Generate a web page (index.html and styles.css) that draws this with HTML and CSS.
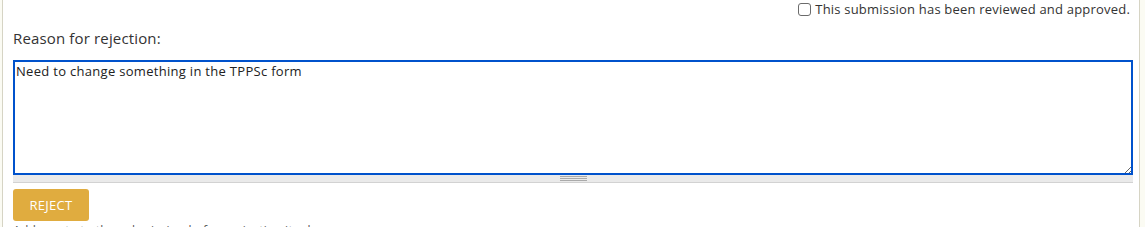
FILE: index.html
```html
<!DOCTYPE html>
<html>
<head>
<meta charset="utf-8">
<link rel="stylesheet" href="styles.css">
</head>
<body>
<div class="frame">
  <div class="panel">
    <div class="approve-row">
      <label class="approve"><span class="box"></span>This submission has been reviewed and approved.</label>
    </div>
    <div class="field">
      <div class="label">Reason for rejection:</div>
      <div class="textarea">Need to change something in the TPPSc form<span class="resize"></span></div>
      <div class="grippie"><span class="grip"></span></div>
    </div>
    <button class="reject">REJECT</button>
    <div class="note">Add a note to the submission before rejecting it, please.</div>
  </div>
</div>
</body>
</html>
```
FILE: styles.css
```css
html, body {
  margin: 0;
  padding: 0;
  background: #fbfbf3;
  overflow: hidden;
}
body {
  font-family: "Open Sans", Lato, sans-serif;
  color: #333;
  width: 1145px;
  height: 227px;
}
.frame {
  padding-left: 2px;
  padding-right: 5px;
  height: 227px;
  box-sizing: border-box;
}
.panel {
  background: #fff;
  border-left: 1px solid #d6d4c4;
  border-right: 1px solid #d6d4c4;
  height: 100%;
  box-sizing: border-box;
  padding: 0 6px 0 10px;
  overflow: hidden;
}
.approve-row {
  display: flex;
  justify-content: flex-end;
  height: 18px;
}
.approve {
  display: flex;
  align-items: center;
  font-size: 13px;
  letter-spacing: 0.2px;
  color: #333;
  gap: 4px;
  padding-right: 3px;
}
.box {
  width: 11px;
  height: 11px;
  border: 1px solid #6b6b6b;
  border-radius: 3px;
  background: #fff;
}
.field {
  margin-top: 8px;
}
.label {
  font-size: 15px;
  letter-spacing: 0.15px;
  color: #333;
  height: 24px;
  line-height: 24px;
  margin-bottom: 10px;
}
.textarea {
  position: relative;
  border: 2px solid #0052cc;
  height: 109px;
  padding: 1px 1px;
  font-size: 13px;
  letter-spacing: 0.3px;
  line-height: 16px;
  color: #222;
  background: #fff;
}
.resize {
  position: absolute;
  right: 0;
  bottom: 0;
  width: 7px;
  height: 7px;
  background: repeating-linear-gradient(135deg, transparent 0 2px, #666 2px 3px);
  clip-path: polygon(100% 0, 100% 100%, 0 100%);
}
.grippie {
  height: 7px;
  background: #eaeaea;
  border-bottom: 1px solid #d2d2d2;
  display: flex;
  justify-content: center;
  align-items: center;
}
.grip {
  width: 27px;
  height: 5px;
  background: repeating-linear-gradient(180deg, #aaa 0 1px, transparent 1px 2px);
}
.reject {
  display: block;
  margin-top: 6px;
  width: 76px;
  height: 32px;
  background: #e0ac3f;
  color: #fff;
  border: none;
  border-radius: 3px;
  font-family: "Open Sans", sans-serif;
  font-size: 13px;
  letter-spacing: 0.3px;
  padding: 0;
}
.note {
  font-size: 12px;
  letter-spacing: 0.3px;
  color: #555;
  margin-top: 1px;
}
```
